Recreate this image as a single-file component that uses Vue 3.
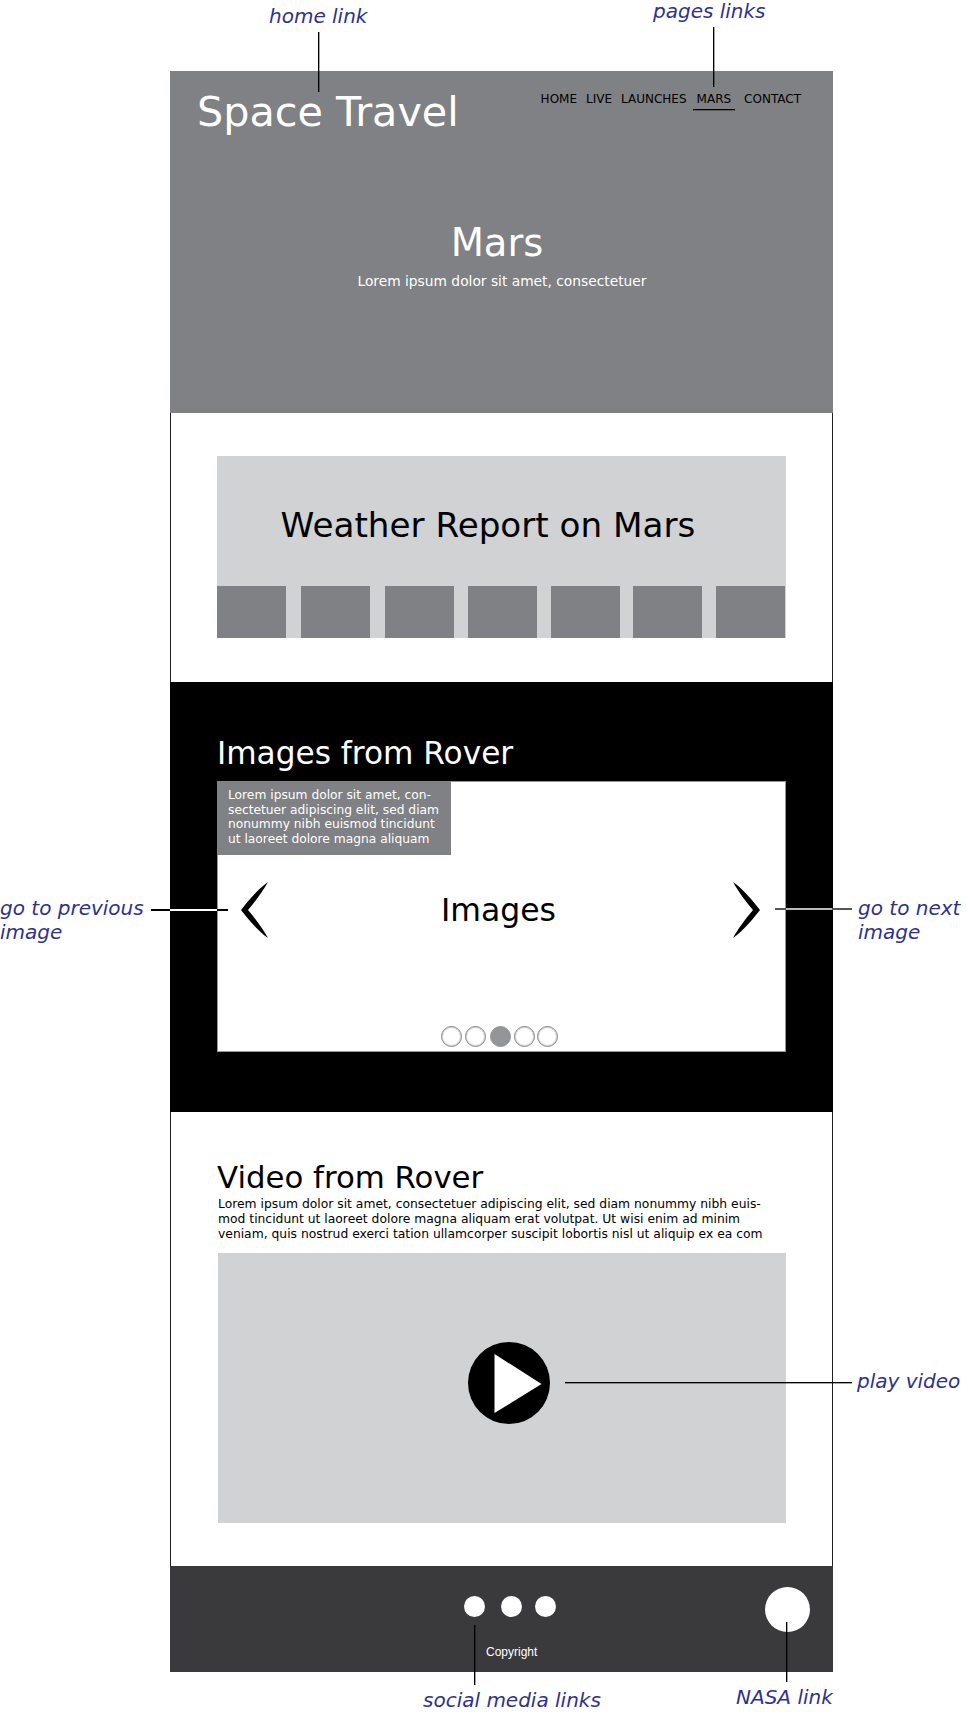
<template>
  <div class="page">
    <div class="frame">
      <header class="hero">
        <div class="top-bar">
          <a class="logo">Space Travel</a>
          <nav class="nav">
            <a
              v-for="link in navLinks"
              :key="link"
              class="nav-link"
              :class="{ active: link === 'MARS' }"
            >{{ link }}</a>
          </nav>
        </div>
        <h1 class="hero-title">Mars</h1>
        <p class="hero-sub">Lorem ipsum dolor sit amet, consectetuer</p>
      </header>

      <section class="weather">
        <div class="weather-card">
          <h2 class="weather-title">Weather Report on Mars</h2>
          <div class="days">
            <div
              v-for="(gap, i) in dayGaps"
              :key="i"
              class="day"
              :style="{ marginLeft: gap + 'px' }"
            ></div>
          </div>
        </div>
      </section>

      <section class="rover-images">
        <h2 class="section-title">Images from Rover</h2>
        <div class="carousel">
          <p class="caption">Lorem ipsum dolor sit amet, con-<br>sectetuer adipiscing elit, sed diam<br>nonummy nibh euismod tincidunt<br>ut laoreet dolore magna aliquam</p>
          <div class="slide">
            <svg class="chevron" width="27" height="56" viewBox="0 0 27 56">
              <path d="M27 0C16 8 8 18 0 28C8 38 16 48 27 56C22 47 14 36 7 28C14 20 22 9 27 0Z" />
            </svg>
            <span class="slide-label">Images</span>
            <svg class="chevron" width="27" height="56" viewBox="0 0 27 56">
              <path d="M0 0C11 8 19 18 27 28C19 38 11 48 0 56C5 47 13 36 20 28C13 20 5 9 0 0Z" />
            </svg>
          </div>
          <div class="pager">
            <span
              v-for="n in 5"
              :key="n"
              class="pager-dot"
              :class="{ current: n === 3 }"
            ></span>
          </div>
        </div>
      </section>

      <section class="rover-video">
        <h2 class="section-title">Video from Rover</h2>
        <p class="video-text">Lorem ipsum dolor sit amet, consectetuer adipiscing elit, sed diam nonummy nibh euis-<br>mod tincidunt ut laoreet dolore magna aliquam erat volutpat. Ut wisi enim ad minim<br>veniam, quis nostrud exerci tation ullamcorper suscipit lobortis nisl ut aliquip ex ea com</p>
        <div class="player">
          <svg class="play" width="82" height="82" viewBox="0 0 82 82">
            <circle cx="41" cy="41" r="41" fill="#000" />
            <path d="M26.500 12L73.500 42L26.500 71Z" fill="#fff" />
          </svg>
        </div>
      </section>

      <footer class="footer">
        <div class="footer-mid">
          <div class="social">
            <a v-for="n in 3" :key="n" class="social-dot"></a>
          </div>
          <p class="copyright">Copyright</p>
        </div>
        <a class="nasa"></a>
      </footer>
    </div>

    <!-- wireframe notes -->
    <span class="note note-home">home link</span>
    <span class="note note-pages">pages links</span>
    <span class="note note-prev">go to previous<br>image</span>
    <span class="note note-next">go to next<br>image</span>
    <span class="note note-play">play video</span>
    <span class="note note-social">social media links</span>
    <span class="note note-nasa">NASA link</span>

    <i class="lead lead-home"></i>
    <i class="lead lead-pages"></i>
    <i class="lead lead-prev"></i>
    <i class="lead lead-next"></i>
    <i class="lead lead-play"></i>
    <i class="lead lead-social"></i>
    <i class="lead lead-nasa"></i>
  </div>
</template>

<script setup>
const navLinks = ['HOME', 'LIVE', 'LAUNCHES', 'MARS', 'CONTACT']
// the tiles in the wireframe are not evenly spaced
const dayGaps = [0, 15.6, 15.2, 13.8, 14, 12.7, 14.7]
</script>

<style>
body {
  background: #fff;
}
</style>

<style scoped>
.page {
  position: relative;
  width: 968px;
  height: 1714px;
  overflow: hidden;
  background: #fff;
  font-family: "DejaVu Sans", Verdana, sans-serif;
  color: #000;
}

.frame {
  width: 663px;
  margin-left: 170px;
  padding-top: 71px;
}

.frame > * {
  box-sizing: border-box;
  border-left: 1px solid #231f20;
  border-right: 1px solid #231f20;
}

/* header */
.hero {
  height: 342px;
  background: #808184;
  color: #fff;
  border-color: #808184 !important;
  padding: 16px 31px 0 26px;
}

.top-bar {
  display: flex;
  justify-content: space-between;
}

.logo {
  font-size: 41.300px;
  line-height: 50px;
}

.nav {
  display: flex;
  gap: 9px;
  padding-top: 5px;
  color: #000;
}

.nav-link {
  font-size: 12px;
  line-height: 15px;
  height: 17px;
}

.nav-link.active {
  padding: 0 4px;
  margin-left: -3px;
  border-bottom: 1px solid #000;
  box-shadow: 0 1px 0 rgba(0, 0, 0, 0.3);
}

.hero-title {
  margin: 84px 0 0 0;
  padding-right: 4px;
  font-size: 38.500px;
  font-weight: 400;
  line-height: 44px;
  text-align: center;
}

.hero-sub {
  margin: 7px 0 0 0;
  padding-left: 6px;
  font-size: 13.800px;
  line-height: 18px;
  text-align: center;
}

/* weather */
.weather {
  height: 269px;
  padding: 43px 46.500px 0 45.500px;
  background: #fff;
}

.weather-card {
  display: flex;
  flex-direction: column;
  height: 182px;
  background: #d1d2d4;
}

.weather-title {
  flex: 1;
  margin: 0;
  padding: 9px 26px 0 0;
  font-size: 34.200px;
  font-weight: 400;
  line-height: 121px;
  text-align: center;
}

.days {
  display: flex;
}

.day {
  width: 69px;
  height: 52px;
  background: #808184;
}

/* carousel */
.rover-images {
  height: 430px;
  padding: 47px 46px 0 46px;
  background: #000;
  border-color: #000 !important;
  color: #fff;
}

.section-title {
  margin: 0;
  font-size: 31px;
  font-weight: 400;
  line-height: 49px;
}

.rover-images .section-title {
  margin-bottom: 3px;
  font-size: 31.200px;
}

.carousel {
  position: relative;
  display: flex;
  flex-direction: column;
  height: 271px;
  box-sizing: border-box;
  background: #fff;
  border: 1px solid #939598;
  color: #000;
}

.caption {
  position: absolute;
  top: -1px;
  left: -1px;
  width: 234px;
  height: 74px;
  box-sizing: border-box;
  margin: 0;
  padding: 7px 0 0 11px;
  background: #808184;
  color: #fff;
  font-size: 12.250px;
  line-height: 14.700px;
  white-space: nowrap;
}

.slide {
  display: flex;
  align-items: center;
  justify-content: space-between;
  padding: 100px 25px 0 23px;
}

.slide-label {
  font-size: 31.500px;
  line-height: 56px;
  margin-left: -4px;
}

.chevron {
  display: block;
  fill: #000;
}

.pager {
  display: flex;
  justify-content: center;
  gap: 3px;
  margin-top: auto;
  padding: 0 4px 4px 0;
}

.pager-dot {
  width: 21px;
  height: 21px;
  box-sizing: border-box;
  border: 1px solid #808184;
  border-radius: 50%;
  box-shadow: inset 0 0 0 1px rgba(147, 149, 152, 0.4);
}

.pager-dot.current {
  margin-left: 1px;
  border-color: #939598;
  background: #939598;
}

.pager-dot:last-child {
  margin-left: -1px;
}

/* video */
.rover-video {
  height: 454px;
  padding: 45px 46px 0 47px;
  background: #fff;
}

.rover-video .section-title {
  margin-left: -1px;
  font-size: 30.800px;
  line-height: 40px;
}

.video-text {
  margin: 0;
  font-size: 12.330px;
  line-height: 15px;
  white-space: nowrap;
}

.player {
  display: flex;
  align-items: center;
  justify-content: center;
  height: 270px;
  margin-top: 11px;
  background: #d1d2d4;
}

.play {
  display: block;
  margin: 0 0 10px 14px;
}

/* footer */
.footer {
  display: flex;
  height: 106px;
  background: #3a3a3c;
  border-color: #3a3a3c !important;
  border-bottom: 1px solid #231f20;
}

.footer-mid {
  margin-left: 293px;
}

.social {
  display: flex;
  padding-top: 30px;
}

.social-dot {
  width: 21px;
  height: 21px;
  border-radius: 50%;
  background: #fff;
  margin-right: 13px;
}

.social-dot:first-child {
  margin-right: 16px;
}

.copyright {
  margin: 27px 0 0 22px;
  color: #fff;
  font-family: "Liberation Sans", Arial, sans-serif;
  font-size: 12px;
  line-height: 16px;
}

.nasa {
  width: 45px;
  height: 45px;
  margin: 21px 22px 0 auto;
  border-radius: 50%;
  background: #fff;
}

/* annotations */
.note {
  position: absolute;
  color: #2e3192;
  font-size: 20px;
  font-style: italic;
  line-height: 24px;
  white-space: nowrap;
}

.note-home { left: 269px; top: 4px; }
.note-pages { left: 653px; top: -1px; }
.note-prev { left: 0; top: 896px; }
.note-next { left: 858px; top: 896px; }
.note-play { left: 857px; top: 1369px; }
.note-social { left: 423px; top: 1688px; }
.note-nasa { left: 736px; top: 1685px; }

.lead {
  position: absolute;
  background: #000;
}

.lead-home { left: 318px; top: 32px; width: 1px; height: 60px; box-shadow: 1px 0 0 rgba(0, 0, 0, 0.35); }
.lead-pages { left: 713px; top: 27px; width: 1px; height: 60px; box-shadow: 1px 0 0 rgba(0, 0, 0, 0.35); }
.lead-social { left: 474px; top: 1625px; width: 1px; height: 60px; box-shadow: 1px 0 0 rgba(0, 0, 0, 0.35); }
.lead-nasa { left: 786px; top: 1622px; width: 1px; height: 60px; box-shadow: 1px 0 0 rgba(0, 0, 0, 0.35); }
.lead-play { left: 565px; top: 1382px; width: 287px; height: 1px; box-shadow: 0 1px 0 rgba(0, 0, 0, 0.35); }

.lead-prev {
  left: 151px;
  top: 909px;
  width: 77px;
  height: 2px;
  background: linear-gradient(to right, #000 19px, #fff 19px, #fff 66px, #000 66px);
}

.lead-next {
  left: 775px;
  top: 908px;
  width: 77px;
  height: 2px;
  background: linear-gradient(to right, #555 11px, #bbb 11px, #bbb 57px, #555 57px);
}
</style>
